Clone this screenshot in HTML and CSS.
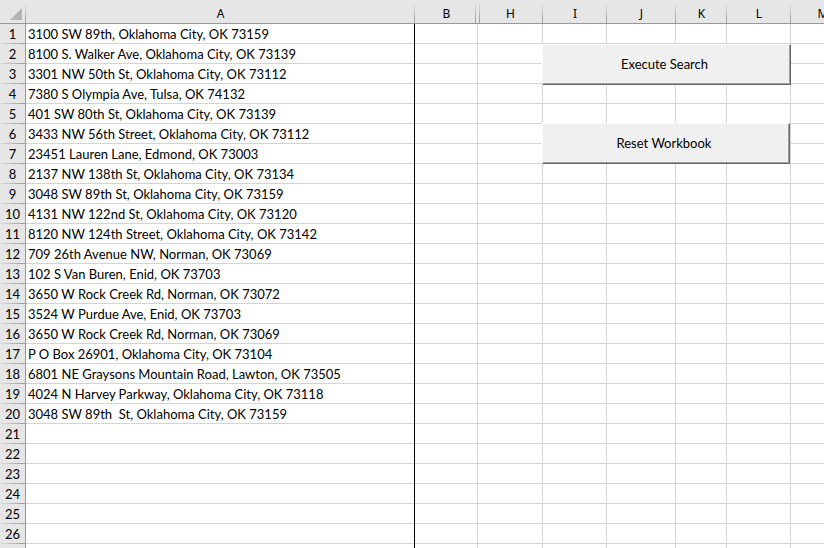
FILE: index.html
```
<!DOCTYPE html>
<html lang="en">
<head>
<meta charset="utf-8">
<title>Addresses</title>
<link rel="stylesheet" href="styles.css">
</head>
<body>
<main class="workbook">
<table class="sheet">
<colgroup><col class="w-rows"><col class="w-a"><col class="w-b"><col class="w-h"><col class="w-i"><col class="w-j"><col class="w-k"><col class="w-l"><col class="w-m"></colgroup>
<thead>
<tr><th class="corner"><svg width="13" height="12" viewBox="0 0 13 12" aria-hidden="true"><path d="M12 0V12H0Z" fill="#b4b4b4"/></svg></th><th scope="col">A</th><th scope="col">B</th><th scope="col" class="after-hidden">H</th><th scope="col">I</th><th scope="col">J</th><th scope="col">K</th><th scope="col">L</th><th scope="col">M</th></tr>
</thead>
<tbody>
<tr><th scope="row">1</th><td>3100 SW 89th, Oklahoma City, OK 73159</td><td></td><td></td><td></td><td></td><td></td><td></td><td></td></tr>
<tr><th scope="row">2</th><td>8100 S. Walker Ave, Oklahoma City, OK 73139</td><td></td><td></td><td></td><td></td><td></td><td></td><td></td></tr>
<tr><th scope="row">3</th><td>3301 NW 50th St, Oklahoma City, OK 73112</td><td></td><td></td><td></td><td></td><td></td><td></td><td></td></tr>
<tr><th scope="row">4</th><td>7380 S Olympia Ave, Tulsa, OK 74132</td><td></td><td></td><td></td><td></td><td></td><td></td><td></td></tr>
<tr><th scope="row">5</th><td>401 SW 80th St, Oklahoma City, OK 73139</td><td></td><td></td><td></td><td></td><td></td><td></td><td></td></tr>
<tr><th scope="row">6</th><td>3433 NW 56th Street, Oklahoma City, OK 73112</td><td></td><td></td><td></td><td></td><td></td><td></td><td></td></tr>
<tr><th scope="row">7</th><td>23451 Lauren Lane, Edmond, OK 73003</td><td></td><td></td><td></td><td></td><td></td><td></td><td></td></tr>
<tr><th scope="row">8</th><td>2137 NW 138th St, Oklahoma City, OK 73134</td><td></td><td></td><td></td><td></td><td></td><td></td><td></td></tr>
<tr><th scope="row">9</th><td>3048 SW 89th St, Oklahoma City, OK 73159</td><td></td><td></td><td></td><td></td><td></td><td></td><td></td></tr>
<tr><th scope="row">10</th><td>4131 NW 122nd St, Oklahoma City, OK 73120</td><td></td><td></td><td></td><td></td><td></td><td></td><td></td></tr>
<tr><th scope="row">11</th><td>8120 NW 124th Street, Oklahoma City, OK 73142</td><td></td><td></td><td></td><td></td><td></td><td></td><td></td></tr>
<tr><th scope="row">12</th><td>709 26th Avenue NW, Norman, OK 73069</td><td></td><td></td><td></td><td></td><td></td><td></td><td></td></tr>
<tr><th scope="row">13</th><td>102 S Van Buren, Enid, OK 73703</td><td></td><td></td><td></td><td></td><td></td><td></td><td></td></tr>
<tr><th scope="row">14</th><td>3650 W Rock Creek Rd, Norman, OK 73072</td><td></td><td></td><td></td><td></td><td></td><td></td><td></td></tr>
<tr><th scope="row">15</th><td>3524 W Purdue Ave, Enid, OK 73703</td><td></td><td></td><td></td><td></td><td></td><td></td><td></td></tr>
<tr><th scope="row">16</th><td>3650 W Rock Creek Rd, Norman, OK 73069</td><td></td><td></td><td></td><td></td><td></td><td></td><td></td></tr>
<tr><th scope="row">17</th><td>P O Box 26901, Oklahoma City, OK 73104</td><td></td><td></td><td></td><td></td><td></td><td></td><td></td></tr>
<tr><th scope="row">18</th><td>6801 NE Graysons Mountain Road, Lawton, OK 73505</td><td></td><td></td><td></td><td></td><td></td><td></td><td></td></tr>
<tr><th scope="row">19</th><td>4024 N Harvey Parkway, Oklahoma City, OK 73118</td><td></td><td></td><td></td><td></td><td></td><td></td><td></td></tr>
<tr><th scope="row">20</th><td>3048 SW 89th  St, Oklahoma City, OK 73159</td><td></td><td></td><td></td><td></td><td></td><td></td><td></td></tr>
<tr><th scope="row">21</th><td></td><td></td><td></td><td></td><td></td><td></td><td></td><td></td></tr>
<tr><th scope="row">22</th><td></td><td></td><td></td><td></td><td></td><td></td><td></td><td></td></tr>
<tr><th scope="row">23</th><td></td><td></td><td></td><td></td><td></td><td></td><td></td><td></td></tr>
<tr><th scope="row">24</th><td></td><td></td><td></td><td></td><td></td><td></td><td></td><td></td></tr>
<tr><th scope="row">25</th><td></td><td></td><td></td><td></td><td></td><td></td><td></td><td></td></tr>
<tr><th scope="row">26</th><td></td><td></td><td></td><td></td><td></td><td></td><td></td><td></td></tr>
<tr><th scope="row"></th><td></td><td></td><td></td><td></td><td></td><td></td><td></td><td></td></tr>
</tbody>
</table>
<button type="button" class="macro execute">Execute Search</button>
<button type="button" class="macro reset">Reset Workbook</button>
</main>
</body>
</html>
```
FILE: styles.css
```
* { box-sizing: border-box; }

body {
  margin: 0;
  background: #fff;
  color: #000;
  font-family: Lato, "Liberation Sans", sans-serif;
  font-size: 13px;
}

.workbook {
  position: relative;
  height: 100vh;
  overflow: hidden;
}

/* Grid */
.sheet {
  table-layout: fixed;
  width: 855px;
  border-collapse: separate;
  border-spacing: 0;
}

.w-rows { width: 26px; }
.w-a { width: 389px; }
.w-b { width: 63px; }
.w-h { width: 65px; }
.w-i { width: 64px; }
.w-j { width: 69px; }
.w-k { width: 51px; }
.w-l { width: 64px; }
.w-m { width: 64px; }

th, td {
  height: 20px;
  padding: 0;
  line-height: 20px;
  white-space: pre;
}

td {
  padding-left: 2px;
  border-right: 1px solid #d4d4d4;
  box-shadow: inset 0 -1px #d4d4d4;
}

td:nth-child(2) { border-right-color: #000; }

th {
  background-color: #e6e6e6;
  background-repeat: no-repeat;
  font-weight: 400;
}

thead th {
  height: 24px;
  padding-top: 4px;
  border-bottom: 1px solid #999;
  background-image: linear-gradient(#dcdcdc, #999);
  background-position: right bottom;
  background-size: 1px 19px;
  font-family: "Noto Sans", "Open Sans", sans-serif;
  font-size: 12px;
  line-height: 19px;
}

thead th:nth-child(3) {
  background-position: right 2px bottom;
}

thead .after-hidden {
  background-image: linear-gradient(#dcdcdc, #999), linear-gradient(#dcdcdc, #999);
  background-position: right bottom, left 1px bottom;
}

thead .corner {
  padding: 4px 3px 0 0;
  text-align: right;
  line-height: 0;
}

tbody th {
  border-right: 1px solid #999;
  background-image: linear-gradient(to right, #dcdcdc, #999);
  background-position: left bottom;
  background-size: 100% 1px;
}

/* Raised buttons floating over the cells */
.macro {
  position: absolute;
  left: 542px;
  height: 41px;
  padding: 0 4px 2px 0;
  border: 1px solid #fff;
  border-right-color: #646464;
  border-bottom-color: #646464;
  border-radius: 0;
  background: #f0f0f0;
  box-shadow: inset -1px -1px #a0a0a0;
  color: #000;
  font: inherit;
}

.execute { top: 44px; width: 249px; }
.reset { top: 123px; width: 248px; }
```
